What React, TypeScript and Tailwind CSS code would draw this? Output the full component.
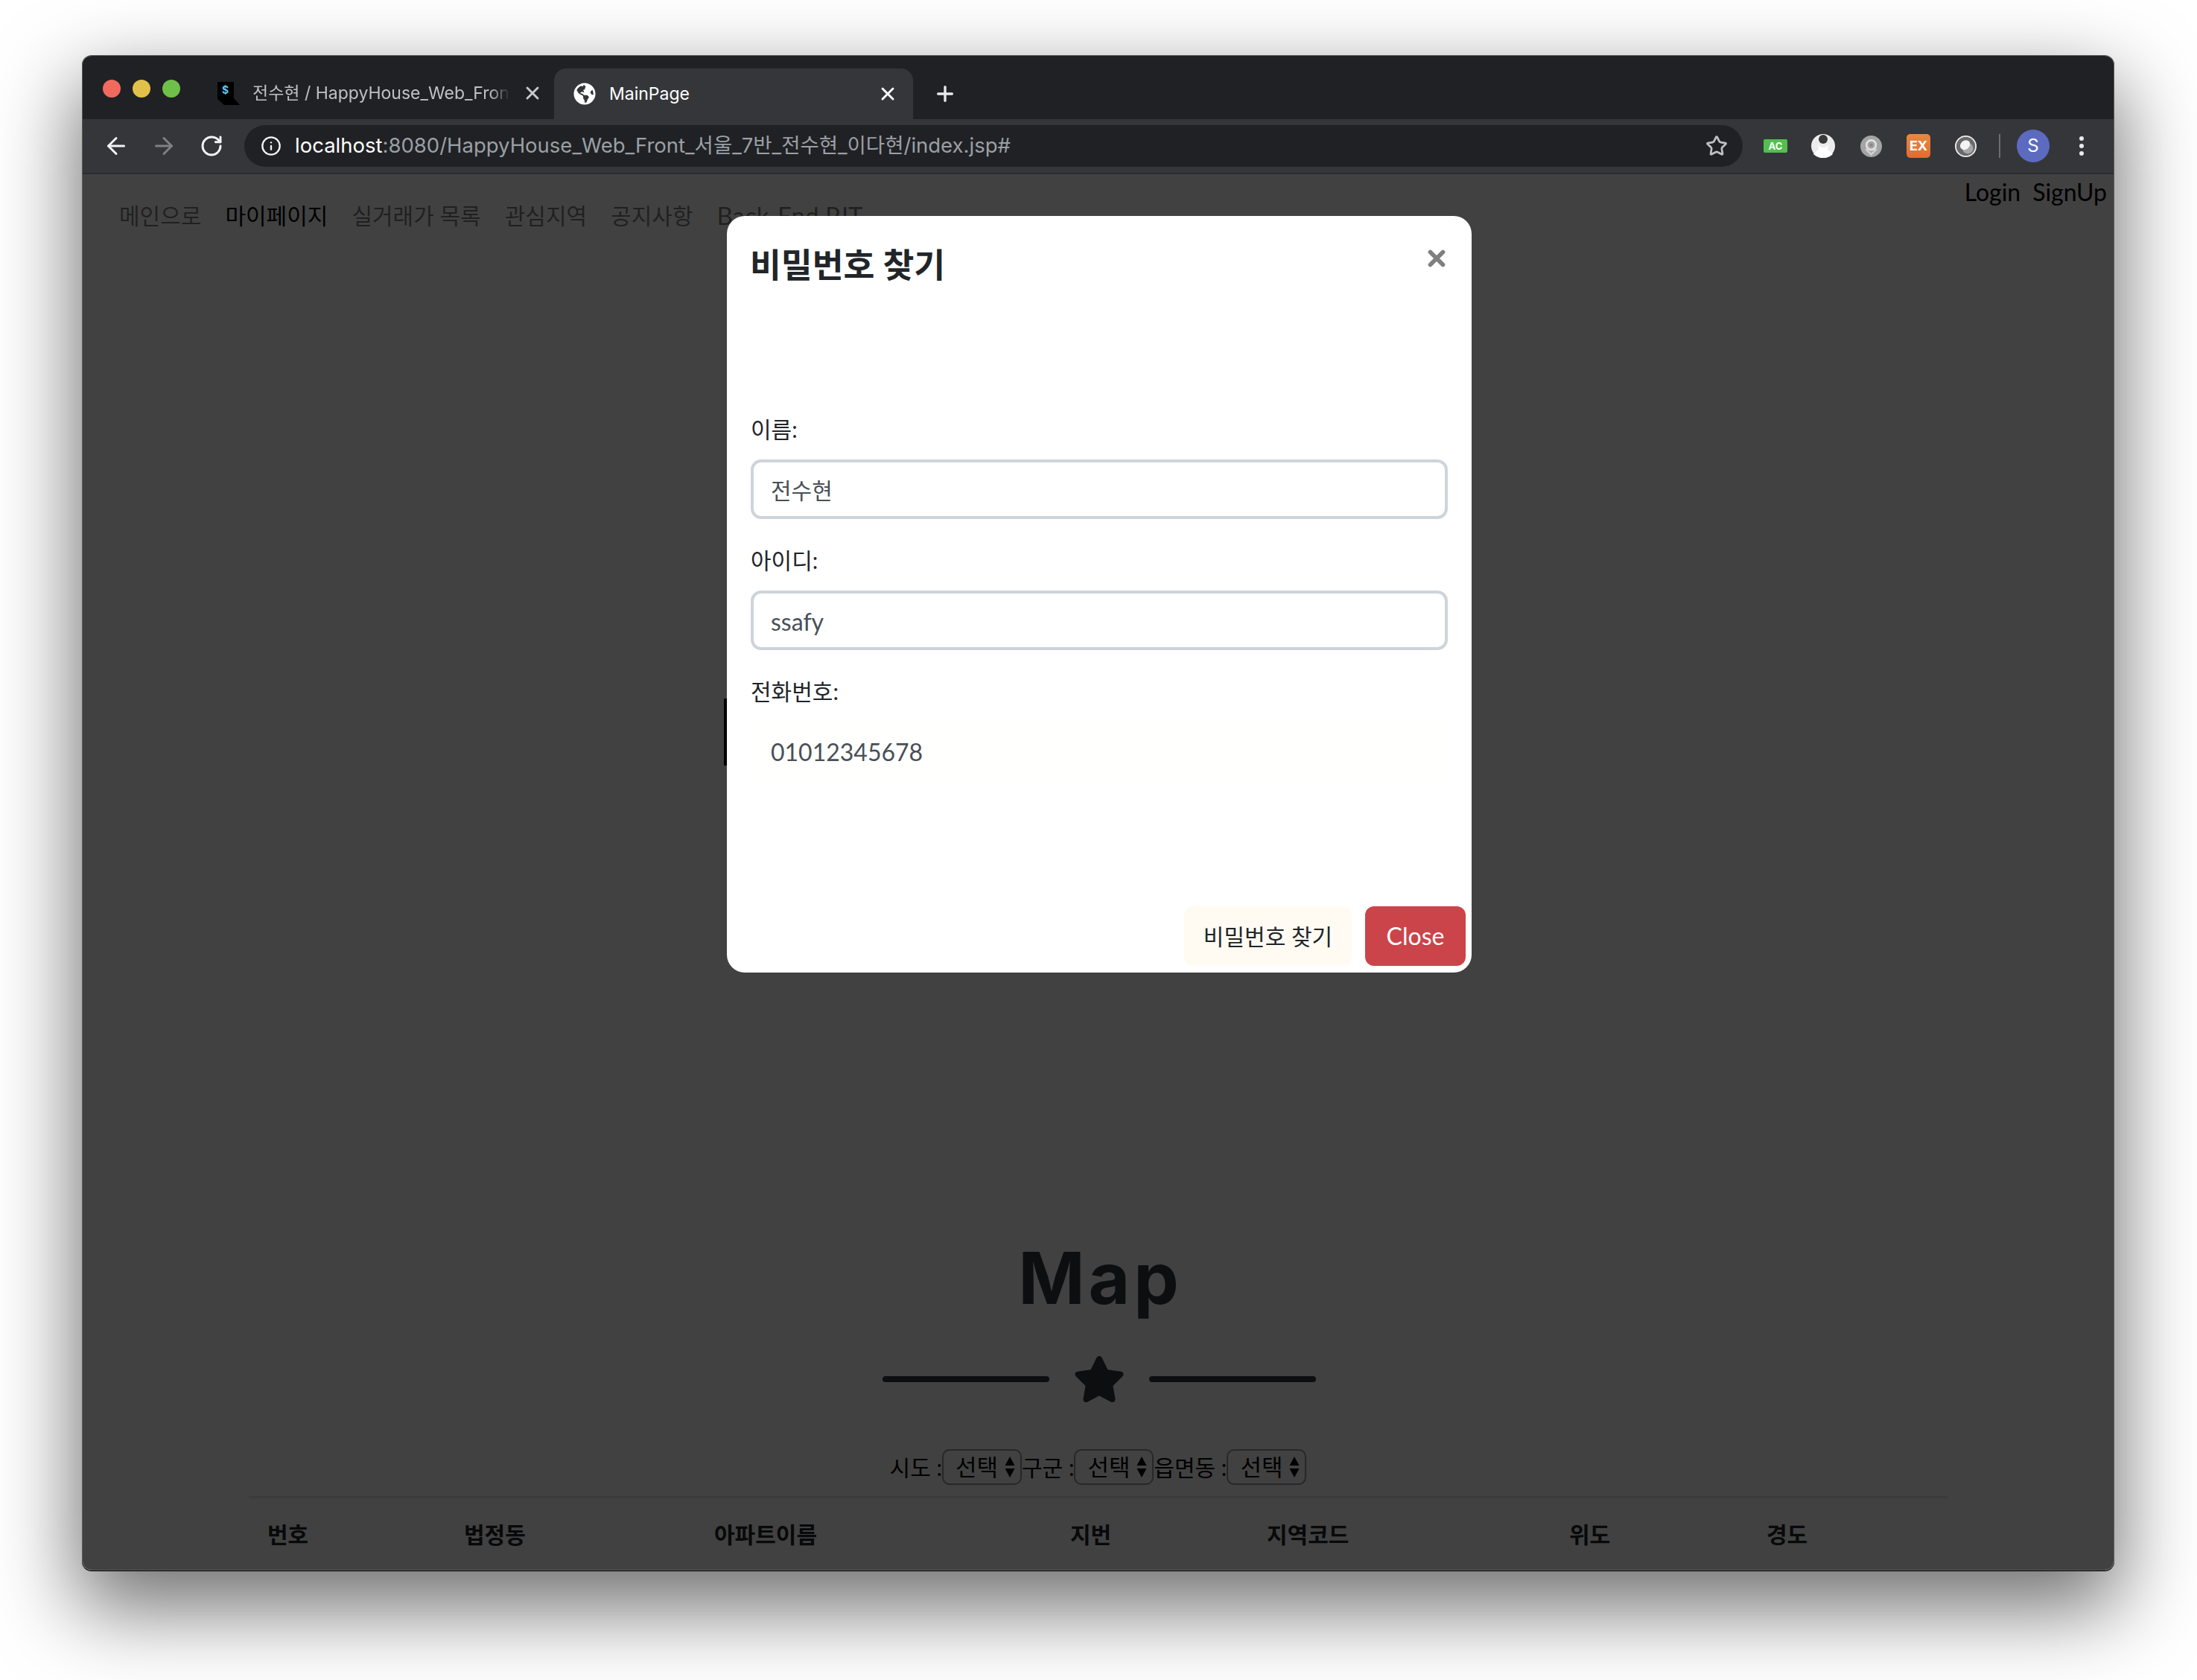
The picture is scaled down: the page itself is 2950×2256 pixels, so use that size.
import { ArrowLeft, ArrowRight, Info, Plus, RotateCw, Star, X } from 'lucide-react'
import { FaGlobeAmericas, FaStar } from 'react-icons/fa'

const navItems = ['메인으로', '마이페이지', '실거래가 목록', '관심지역', '공지사항', 'Back-End PJT']
const tableHeads = ['번호', '법정동', '아파트이름', '지번', '지역코드', '위도', '경도']

function SelectBox() {
  return (
    <div className="flex h-[48px] w-[107px] items-center justify-between rounded-[10px] border-2 border-[#9a9a9a] pl-[16px] pr-[6px]">
      <span className="text-[31px] leading-none text-black">선택</span>
      <svg viewBox="0 0 16 32" className="h-[32px] w-[16px] fill-black">
        <path d="M8 2l6.5 12h-13zM8 30l-6.5-12h13z" />
      </svg>
    </div>
  )
}

function Extensions() {
  return (
    <div className="ml-[28px] flex items-center">
      <div className="flex h-[18px] w-[32px] items-center justify-center rounded-[2px] bg-[#52bf4e] text-[13px] font-bold leading-none text-white">
        AC
      </div>
      <svg viewBox="0 0 32 32" className="ml-[32px] h-[32px] w-[32px]">
        <circle cx="16" cy="16" r="16" fill="#ececec" />
        <circle cx="16" cy="7" r="6" fill="#3a3a3a" />
        <path d="M9 13c2 7 12 7 14 0l-1 8c3 2 6 4 7 6-7 7-19 7-26 0 1-2 4-4 7-6z" fill="#fff" />
      </svg>
      <svg viewBox="0 0 32 32" className="ml-[34px] h-[29px] w-[29px]">
        <circle cx="16" cy="16" r="16" fill="#a4a4a4" />
        <circle cx="16" cy="14" r="7" fill="none" stroke="#e0e0e0" strokeWidth="3" />
        <circle cx="16" cy="14" r="2.5" fill="#8a8a8a" />
        <path d="M8 20l8 8 8-8" fill="none" stroke="#d0d0d0" strokeWidth="3" />
      </svg>
      <div className="ml-[33px] flex h-[32px] w-[32px] items-center justify-center rounded-[5px] bg-[linear-gradient(#e68a42,#e26b32)] text-[18px] font-bold leading-none text-white">
        EX
      </div>
      <svg viewBox="0 0 32 32" className="ml-[33px] h-[29px] w-[29px]">
        <circle cx="16" cy="16" r="15" fill="#6a6a6a" stroke="#eee" strokeWidth="2" />
        <circle cx="19" cy="19" r="8" fill="#a8a8a8" />
        <ellipse cx="15" cy="14" rx="8" ry="6.5" transform="rotate(-40 15 14)" fill="#f4f4f4" />
      </svg>
      <div className="ml-[30px] h-[32px] w-[2px] bg-[#6c6d70]" />
      <div className="ml-[22px] flex h-[44px] w-[44px] items-center justify-center rounded-full bg-[#5c6bc0] text-[24px] leading-none text-white">
        S
      </div>
      <div className="ml-[40px] flex flex-col gap-[4px]">
        <div className="h-[6px] w-[6px] rounded-full bg-[#e8eaed]" />
        <div className="h-[6px] w-[6px] rounded-full bg-[#e8eaed]" />
        <div className="h-[6px] w-[6px] rounded-full bg-[#e8eaed]" />
      </div>
    </div>
  )
}

function Modal() {
  return (
    <div className="relative flex h-[1016px] w-[1000px] flex-col rounded-[24px] bg-white font-['Lato','Noto_Sans_CJK_KR',sans-serif]">
      <div className="absolute left-[-4px] top-[648px] h-[90px] w-[4px] bg-black" />
      <div className="flex items-start justify-between pl-[31px] pr-[30px] pt-[36px]">
        <h4 className="text-[45.5px] font-bold leading-[60px] text-[#212529]">비밀번호 찾기</h4>
        <X className="mt-[4px] h-[34px] w-[34px] text-[#7f7f7f]" strokeWidth={4} />
      </div>
      <div className="flex flex-col px-[32px] pt-[170px]">
        <label className="text-[30px] leading-[40px] text-[#212529]">이름:</label>
        <input
          readOnly
          value="전수현"
          className="mt-[21px] h-[80px] w-full rounded-[14px] border-4 border-[#ced4da] bg-white px-[23px] text-[30px] text-[#495057] outline-none"
        />
        <label className="mt-[35px] text-[30px] leading-[40px] text-[#212529]">아이디:</label>
        <input
          readOnly
          value="ssafy"
          className="mt-[21px] h-[80px] w-full rounded-[14px] border-4 border-[#ced4da] bg-white px-[23px] pt-[3px] text-[32px] text-[#495057] outline-none"
        />
        <label className="mt-[35px] text-[30px] leading-[40px] text-[#212529]">전화번호:</label>
        <div className="-mx-[3px] mt-[17px] flex h-[89px] items-center rounded-[12px] bg-[#fffffd] px-[30px] text-[32px] text-[#495057]">
          01012345678
        </div>
      </div>
      <div className="mt-auto flex justify-end gap-[18px] pb-[9px] pr-[8px]">
        <button className="h-[80px] w-[225px] rounded-[12px] bg-[#fffbf3] text-[30px] text-[#212529]">비밀번호 찾기</button>
        <button className="h-[80px] w-[135px] rounded-[12px] bg-[#cb444a] text-[32px] text-white">Close</button>
      </div>
    </div>
  )
}

export default function App() {
  return (
    <div className="h-[2256px] w-[2950px] overflow-hidden bg-white pl-[111px] pt-[75px]">
      <div className="flex h-[2033px] w-[2727px] flex-col overflow-hidden rounded-[12px] shadow-[0_0_0_1px_#5a5a5a,0_1px_0_1px_#000,0_44px_110px_8px_rgba(0,0,0,0.56)]">
        {/* tab strip */}
        <div className="flex h-[85px] shrink-0 items-end bg-[#202124] font-['Inter','Noto_Sans_CJK_KR',sans-serif]">
          <div className="mb-[29px] ml-[27px] flex gap-[16px]">
            <div className="h-[24px] w-[24px] rounded-full bg-[#f26a5e]" />
            <div className="h-[24px] w-[24px] rounded-full bg-[#e2c14a]" />
            <div className="h-[24px] w-[24px] rounded-full bg-[#6fc049]" />
          </div>
          <div className="ml-[49px] flex h-[68px] w-[453px] items-center pb-[2px]">
            <svg viewBox="0 0 32 32" className="h-[32px] w-[32px] shrink-0">
              <path d="M1 1h22v22l8 9H10l-9-8z" fill="#000" />
              <text x="7" y="17" fontSize="14" fontWeight="700" fill="#5fc3f0">$</text>
            </svg>
            <div className="ml-[16px] w-[346px] shrink-0 overflow-hidden whitespace-nowrap text-[23px] text-[#bdc1c6] [mask-image:linear-gradient(to_right,black_92%,transparent)]">
              전수현 / HappyHouse_Web_Fron
            </div>
            <X className="ml-[16px] h-[28px] w-[28px] shrink-0 text-[#c8cacd]" strokeWidth={2.5} />
          </div>
          <div className="flex h-[68px] w-[482px] items-center rounded-t-[16px] bg-[#35363a] pl-[26px] pr-[20px]">
            <FaGlobeAmericas className="h-[30px] w-[30px] text-white" />
            <span className="ml-[18px] text-[23px] text-white">MainPage</span>
            <X className="ml-auto h-[28px] w-[28px] text-white" strokeWidth={2.5} />
          </div>
          <Plus className="mb-[18px] ml-[27px] h-[32px] w-[32px] text-[#e8eaed]" strokeWidth={2.5} />
        </div>
        {/* toolbar */}
        <div className="flex h-[74px] shrink-0 items-center border-b-2 border-[#2c2c2e] bg-[#35363a] font-['Inter','Noto_Sans_CJK_KR',sans-serif]">
          <ArrowLeft className="ml-[27px] h-[36px] w-[36px] text-[#f1f3f4]" strokeWidth={2} />
          <ArrowRight className="ml-[28px] h-[36px] w-[36px] text-[#7f8184]" strokeWidth={2} />
          <RotateCw className="ml-[30px] h-[32px] w-[32px] text-[#f1f3f4]" strokeWidth={2.2} />
          <div className="ml-[28px] flex h-[56px] w-[2012px] items-center rounded-full bg-[#202124] pl-[22px] pr-[20px]">
            <Info className="h-[28px] w-[28px] text-[#f1f3f4]" strokeWidth={2} />
            <div className="ml-[18px] text-[27.5px] text-[#9aa0a6]">
              <span className="text-white">localhost</span>:8080/HappyHouse_Web_Front_서울_7반_전수현_이다현/index.jsp#
            </div>
            <Star className="ml-auto h-[30px] w-[30px] text-[#bdc1c6]" strokeWidth={2.2} />
          </div>
          <Extensions />
        </div>
        {/* page */}
        <div className="relative flex min-h-0 flex-1 flex-col overflow-hidden bg-white font-['Lato','Noto_Sans_CJK_KR',sans-serif]">
          <div className="flex shrink-0 items-start justify-between">
            <nav className="flex gap-[32px] pl-[49px] pt-[33px] text-[30px] leading-[44px] text-black/50">
              {navItems.map((item) => (
                <span
                  key={item}
                  className={item === '마이페이지' ? 'text-black' : item === 'Back-End PJT' ? 'text-[33px]' : ''}
                >
                  {item}
                </span>
              ))}
            </nav>
            <div className="flex gap-[16px] pr-[9px] pt-[4px] text-[32px] leading-[40px] text-black">
              <span>Login</span>
              <span>SignUp</span>
            </div>
          </div>
          <h2 className="mt-[1349px] pl-[6px] text-center font-['Inter',sans-serif] text-[96px] font-bold leading-[112px] tracking-[5px] text-[#343a40]">
            Map
          </h2>
          <div className="mt-[48px] flex items-center justify-center pl-[3px]">
            <div className="h-[8px] w-[224px] rounded-full bg-[#343a40]" />
            <FaStar className="mx-[32px] h-[64px] w-[70px] text-[#343a40]" />
            <div className="h-[8px] w-[224px] rounded-full bg-[#343a40]" />
          </div>
          <div className="mt-[62px] flex items-center justify-center text-[30px] leading-none text-black">
            <span>시도 :</span>
            <SelectBox />
            <span>구군 :</span>
            <SelectBox />
            <span>읍면동 :</span>
            <SelectBox />
          </div>
          <div className="mx-auto mt-[15px] w-[2281px] border-t-[3px] border-black/10">
            <div className="grid grid-cols-[264px_336px_478px_264px_406px_265px_268px] pt-[28px]">
              {tableHeads.map((head) => (
                <div key={head} className="px-[25px] text-[30px] font-bold leading-[40px] text-[#212529]">
                  {head}
                </div>
              ))}
            </div>
          </div>
          {/* backdrop + dialog */}
          <div className="absolute inset-0 flex items-start justify-center bg-black/[0.745] pl-[3px] pt-[56px]">
            <Modal />
          </div>
        </div>
      </div>
    </div>
  )
}
